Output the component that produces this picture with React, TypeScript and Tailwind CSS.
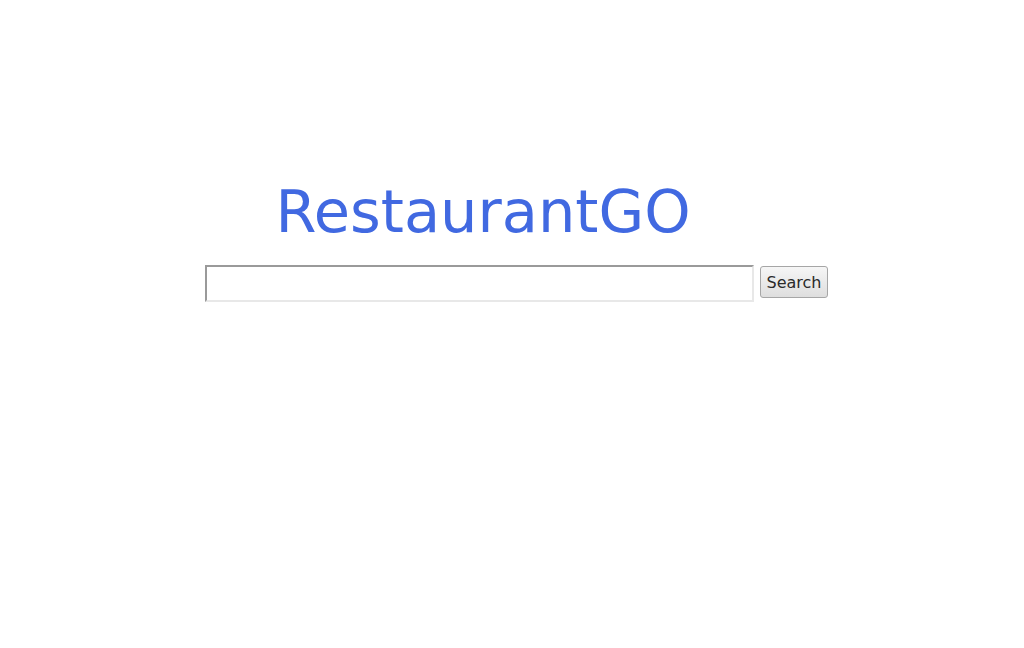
export default function App() {
  return (
    <div className="min-h-screen w-full bg-white flex flex-col items-center pt-[178px]">
      {/* Title */}
      <div className="pr-[58px]">
        <h1 className="text-[59px] leading-[1.164] text-[#4169e1] font-normal font-['DejaVu_Sans',sans-serif]">
          RestaurantGO
        </h1>
      </div>

      {/* Search form */}
      <form
        className="flex items-start gap-[6px] pl-[9px] mt-[18px]"
        onSubmit={(e) => e.preventDefault()}
      >
        <input
          type="text"
          className="w-[549px] h-[37px] bg-white border-2 border-t-[#9a9a9a] border-l-[#9a9a9a] border-b-[#e8e8e8] border-r-[#e8e8e8] outline-none px-1"
        />
        <button
          type="submit"
          className="mt-px w-[68px] h-[32px] pt-[2px] rounded-[3px] border border-[#a6a6a6] bg-gradient-to-b from-[#f6f6f6] to-[#dedede] text-[16px] leading-none text-[#2a2a2a] font-['DejaVu_Sans',sans-serif]"
        >
          Search
        </button>
      </form>
    </div>
  );
}
